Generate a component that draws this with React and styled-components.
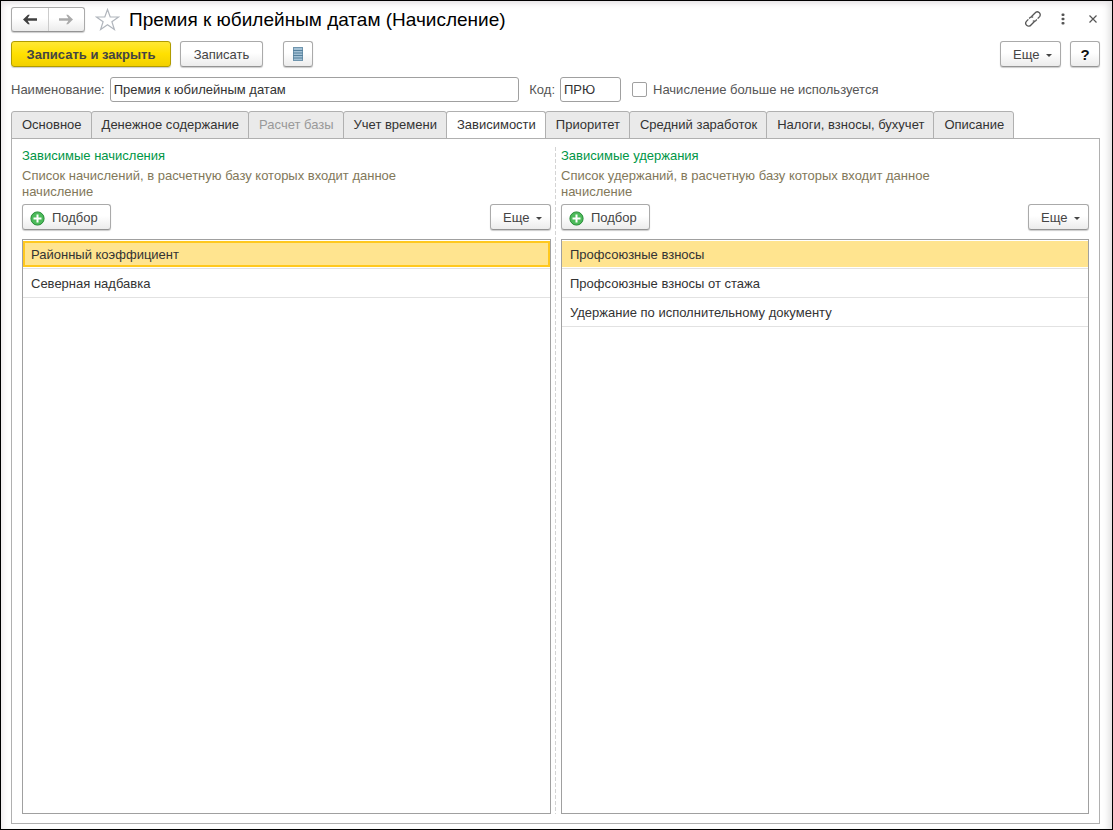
import React, { useState } from "react";
import styled, { createGlobalStyle, css } from "styled-components";

const GlobalStyle = createGlobalStyle`
  *, *::before, *::after { box-sizing: border-box; }
  html, body { margin: 0; padding: 0; }
  body {
    background: #fff;
    color: #333;
    font-family: "Liberation Sans", Arial, sans-serif;
    font-size: 13px;
    line-height: 16px;
  }
  button, input { font: inherit; color: inherit; }
`;

const Window = styled.main`
  display: flex;
  flex-direction: column;
  min-height: 100vh;
  padding: 6px 12px 5px 10px;
  border: 1px solid #000;
  background: #fff;
  box-shadow: inset 0 6px 6px -4px #e2dfe2, inset 6px 0 6px -4px #eeeaec, inset -7px 0 7px -4px #dedede;
`;

const TitleBar = styled.header`
  display: flex;
  align-items: center;
  height: 25px;
`;

const buttonFace = css`
  border: 1px solid #aaa;
  border-bottom-color: #949494;
  border-radius: 3px;
  background: linear-gradient(#fff 45%, #ececec);
  box-shadow: 0 1px 1px #ccc;
`;

const History = styled.nav`
  display: flex;
  width: 74px;
  height: 25px;
  ${buttonFace}
`;

const HistoryButton = styled.button`
  display: flex;
  flex: 1;
  align-items: center;
  justify-content: center;
  padding: 0;
  border: 0;
  background: none;
  color: ${(p) => (p.disabled ? "#aaa" : "#404040")};
  & + & { border-left: 1px solid #ccc; }
`;

const StarButton = styled.button`
  display: flex;
  margin-left: 10px;
  padding: 0;
  border: 0;
  background: none;
`;

const Title = styled.h1`
  flex: 1;
  margin: 0 0 0 9px;
  color: #000;
  font-size: 19px;
  font-weight: 400;
  line-height: 24px;
`;

const WindowTools = styled.div`
  display: flex;
  align-items: center;
  gap: 12px;
  margin-right: -2px;
`;

const ToolButton = styled.button`
  display: flex;
  align-items: center;
  justify-content: center;
  width: 18px;
  height: 25px;
  padding: 0 0 2px;
  border: 0;
  background: none;
  color: #555;
`;

const CommandBar = styled.div`
  display: flex;
  margin-top: 9px;
`;

const Button = styled.button`
  display: flex;
  align-items: center;
  justify-content: ${(p) => (p.$inset ? "flex-start" : "center")};
  gap: 7px;
  width: ${(p) => p.$width}px;
  height: 26px;
  margin-left: ${(p) => p.$before || 0}px;
  padding: ${(p) => (p.$icon ? 0 : 2)}px 0 0 ${(p) => p.$inset || 0}px;
  color: #444;
  white-space: nowrap;
  ${buttonFace}
  ${(p) => p.$primary && css`
    border-color: #b09c00;
    background: linear-gradient(#ffe836, #ffe000 50%, #f2d000);
    font-weight: 700;
  `}
  ${(p) => p.$strong && css`
    color: #111;
    font-size: 15px;
    font-weight: 700;
  `}
`;

const Spacer = styled.div`
  flex: ${(p) => p.$grow || 1} 1 0;
`;

const Caret = styled.span`
  border: 3px solid transparent;
  border-top-color: #444;
  border-bottom: 0;
`;

const Fields = styled.div`
  display: flex;
  align-items: center;
  height: 25px;
  margin-top: 10px;
`;

const Label = styled.label`
  margin-left: ${(p) => p.$before || 0}px;
  color: #555;
  white-space: nowrap;
`;

const TextBox = styled.input`
  flex: ${(p) => (p.$grow ? `${p.$grow} 1 0` : "none")};
  width: ${(p) => p.$width}px;
  min-width: 0;
  height: 25px;
  margin-left: 5px;
  padding: 0 3px;
  border: 1px solid #a0a0a0;
  border-radius: 3px;
  background: #fff;
`;

const CheckBox = styled.input`
  appearance: none;
  width: 15px;
  height: 15px;
  margin: 0 0 0 11px;
  border: 1px solid #a0a0a0;
  border-radius: 2px;
  background: #fff;
  &:checked { background: #777; }
`;

const Tabs = styled.div`
  display: flex;
  height: 28px;
  margin-top: 9px;
`;

const Tab = styled.button`
  height: 28px;
  margin-right: -1px;
  padding: 0 9px 0 10px;
  border: 1px solid #b0b0b0;
  border-radius: 3px 3px 0 0;
  background: #eaeaea;
  white-space: nowrap;
  &[aria-selected="true"] {
    border-bottom-color: #fff;
    background: #fff;
  }
  &:disabled { color: #999; }
`;

const Panel = styled.section`
  display: grid;
  flex: 1;
  grid-template-columns: minmax(0, 529fr) 10px minmax(0, 528fr);
  margin-top: -1px;
  padding: 8px 10px 9px;
  border: 1px solid #b0b0b0;
`;

const Divider = styled.div`
  width: 1px;
  margin-left: 4px;
  background: repeating-linear-gradient(#d4d4d4 0 4px, transparent 4px 6px);
`;

const Group = styled.section`
  display: flex;
  flex-direction: column;
`;

const GroupTitle = styled.h2`
  margin: 0;
  color: #009646;
  font-size: 13px;
  font-weight: 400;
  line-height: 18px;
`;

const Hint = styled.p`
  max-width: 400px;
  margin: 3px 0 4px;
  color: #82785a;
`;

const GroupCommands = styled.div`
  display: flex;
  justify-content: space-between;
`;

const ListFrame = styled.div`
  flex: 1;
  margin-top: 9px;
  border: 1px solid #a0a0a0;
`;

const List = styled.table`
  width: 100%;
  border-collapse: separate;
  border-spacing: 0;
`;

const Cell = styled.td`
  padding: 1px 0;
  border-bottom: 1px solid #e2e2e2;
`;

const CellText = styled.div`
  height: 26px;
  padding: 0 6px;
  border: 2px solid ${(p) => (p.$focused ? "#ffc81e" : "transparent")};
  line-height: 24px;
  background: ${(p) => (p.$selected ? "#ffe48f" : "transparent")} border-box;
`;

const ArrowIcon = ({ flip }) => (
  <svg width="14" height="11" viewBox="0 0 14 11" aria-hidden="true">
    <path
      d="M0 5.5 5 0.8H6.8L4.6 4.3H14V6.7H4.6L6.8 10.2H5Z"
      transform={flip ? "matrix(-1 0 0 1 14 0)" : undefined}
      fill="currentColor"
    />
  </svg>
);

const StarIcon = () => (
  <svg width="25" height="23" viewBox="0 0 25 23" aria-hidden="true">
    <path
      d="M12.5 1.5 15.2 9H23.6L16.9 13.7 19.4 21.5 12.5 16.8 5.6 21.5 8.1 13.7 1.4 9H9.8Z"
      fill="#fff"
      stroke="#b0b5bc"
      strokeWidth="1.2"
    />
  </svg>
);

const LinkIcon = () => (
  <svg width="18" height="18" viewBox="0 0 18 18" fill="none" stroke="currentColor" strokeWidth="1.3" aria-hidden="true">
    <path d="M7.3 6.7 11 3a2.9 2.9 0 0 1 4.6 3.6L12 10.4a2.8 2.8 0 0 1-3.2.4" strokeDasharray="17 1.2" />
    <path d="M10.7 11.3 7 15a2.9 2.9 0 0 1-4.6-3.6L6 7.6a2.8 2.8 0 0 1 3.2-.4" strokeDasharray="17 1.2" />
  </svg>
);

const MoreIcon = () => (
  <svg width="4" height="12" viewBox="0 0 4 12" fill="currentColor" aria-hidden="true">
    <rect x="0.5" y="0.5" width="3" height="2.6" rx="1" />
    <rect x="0.5" y="4.7" width="3" height="2.6" rx="1" />
    <rect x="0.5" y="8.9" width="3" height="2.6" rx="1" />
  </svg>
);

const CloseIcon = () => (
  <svg width="8" height="8" viewBox="0 0 8 8" aria-hidden="true">
    <path d="M0.5 0.5 7.5 7.5M7.5 0.5 0.5 7.5" stroke="currentColor" strokeWidth="1.2" />
  </svg>
);

const ListIcon = () => (
  <svg width="10" height="14" viewBox="0 0 10 14" aria-hidden="true">
    <rect x="0.5" y="0.5" width="9" height="13" fill="#a3c1d5" stroke="#6f95ae" />
    <path d="M0 3.5H10M0 6H10M0 8.5H10M0 11H10" stroke="#55809c" />
  </svg>
);

const PlusIcon = () => (
  <svg width="15" height="15" viewBox="0 0 15 15" aria-hidden="true">
    <circle cx="7.5" cy="7.5" r="6.6" fill="#4dbb5b" stroke="#278c37" />
    <path d="M7.5 3.5V11.5M3.5 7.5H11.5" stroke="#fff" strokeWidth="2" />
  </svg>
);

const MoreButton = () => (
  <Button type="button" $width={61} $inset={12}>
    <span>Еще</span>
    <Caret />
  </Button>
);

const TABS = [
  { label: "Основное" },
  { label: "Денежное содержание" },
  { label: "Расчет базы", disabled: true },
  { label: "Учет времени" },
  { label: "Зависимости" },
  { label: "Приоритет" },
  { label: "Средний заработок" },
  { label: "Налоги, взносы, бухучет" },
  { label: "Описание" },
];

const ACCRUALS = ["Районный коэффициент", "Северная надбавка"];
const DEDUCTIONS = [
  "Профсоюзные взносы",
  "Профсоюзные взносы от стажа",
  "Удержание по исполнительному документу",
];

function DependencyGroup({ title, hint, items, focused }) {
  const [selected, setSelected] = useState(0);
  return (
    <Group>
      <GroupTitle>{title}</GroupTitle>
      <Hint>{hint}</Hint>
      <GroupCommands>
        <Button type="button" $width={89} $inset={7}>
          <PlusIcon />
          <span>Подбор</span>
        </Button>
        <MoreButton />
      </GroupCommands>
      <ListFrame>
        <List aria-label={title}>
          <tbody>
            {items.map((item, i) => (
              <tr key={item} onClick={() => setSelected(i)}>
                <Cell>
                  <CellText $selected={i === selected} $focused={focused && i === selected}>
                    {item}
                  </CellText>
                </Cell>
              </tr>
            ))}
          </tbody>
        </List>
      </ListFrame>
    </Group>
  );
}

export default function App() {
  return (
    <>
      <GlobalStyle />
      <Window>
        <TitleBar>
          <History>
            <HistoryButton type="button" aria-label="Назад"><ArrowIcon /></HistoryButton>
            <HistoryButton type="button" aria-label="Вперед" disabled><ArrowIcon flip /></HistoryButton>
          </History>
          <StarButton type="button" aria-label="В избранное"><StarIcon /></StarButton>
          <Title>Премия к юбилейным датам (Начисление)</Title>
          <WindowTools>
            <ToolButton type="button" aria-label="Ссылка"><LinkIcon /></ToolButton>
            <ToolButton type="button" aria-label="Меню"><MoreIcon /></ToolButton>
            <ToolButton type="button" aria-label="Закрыть"><CloseIcon /></ToolButton>
          </WindowTools>
        </TitleBar>

        <CommandBar>
          <Button type="button" $primary $width={160}>Записать и закрыть</Button>
          <Button type="button" $width={83} $before={9}>Записать</Button>
          <Button type="button" $icon $width={30} $before={20} aria-label="Список"><ListIcon /></Button>
          <Spacer />
          <MoreButton />
          <Button type="button" $strong $width={30} $before={9}>?</Button>
        </CommandBar>

        <Fields>
          <Label htmlFor="name">Наименование:</Label>
          <TextBox id="name" $grow={406} defaultValue="Премия к юбилейным датам" />
          <Label htmlFor="code" $before={10}>Код:</Label>
          <TextBox id="code" $width={61} defaultValue="ПРЮ" />
          <CheckBox id="unused" type="checkbox" />
          <Label htmlFor="unused" $before={6}>Начисление больше не используется</Label>
          <Spacer $grow={224} />
        </Fields>

        <Tabs role="tablist">
          {TABS.map((tab) => (
            <Tab
              key={tab.label}
              type="button"
              role="tab"
              disabled={tab.disabled}
              aria-selected={tab.label === "Зависимости"}
            >
              {tab.label}
            </Tab>
          ))}
        </Tabs>

        <Panel role="tabpanel">
          <DependencyGroup
            title="Зависимые начисления"
            hint="Список начислений, в расчетную базу которых входит данное начисление"
            items={ACCRUALS}
            focused
          />
          <Divider />
          <DependencyGroup
            title="Зависимые удержания"
            hint="Список удержаний, в расчетную базу которых входит данное начисление"
            items={DEDUCTIONS}
          />
        </Panel>
      </Window>
    </>
  );
}
